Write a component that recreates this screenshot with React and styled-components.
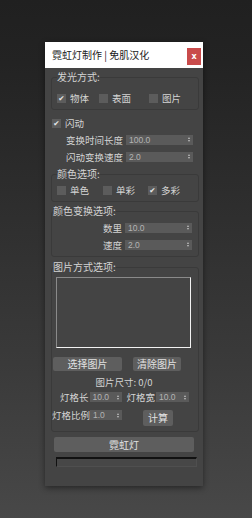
import styled, { createGlobalStyle } from "styled-components";

const Global = createGlobalStyle`
  html, body { margin: 0; padding: 0; }
  body {
    background: linear-gradient(#202020 0%, #232323 12%, #3a3a3a 70%, #484848 100%);
    min-height: 518px;
    font-family: "Noto Sans CJK SC", "Noto Sans", sans-serif;
  }
`;

const Page = styled.div`
  width: 252px;
  height: 518px;
  padding: 42px 0 0 45px;
  box-sizing: border-box;
`;

const Window = styled.div`
  width: 158px;
  height: 444px;
  background: #444444;
  box-shadow: 0 2px 6px rgba(0, 0, 0, 0.45);
  display: flex;
  flex-direction: column;
`;

const TitleBar = styled.div`
  height: 26px;
  flex-shrink: 0;
  background: #ffffff;
  display: flex;
  justify-content: space-between;
  padding: 0 2px 0 7px;
  font-size: 10px;
  line-height: 26px;
  color: #222;
  white-space: nowrap;
`;

const Close = styled.div`
  width: 14px;
  height: 17px;
  margin-top: 6px;
  background: #c94b4b;
  color: #fff;
  font-family: "DejaVu Sans", sans-serif;
  font-size: 8px;
  font-weight: bold;
  line-height: 17px;
  text-align: center;
`;

const Body = styled.div`
  padding: 3px 4px 0 6px;
  display: flex;
  flex-direction: column;
  color: #d4d4d4;
  font-size: 9.5px;
  white-space: nowrap;
`;

const Group = styled.fieldset`
  margin: ${(p) => p.$mt || 0}px 0 0 0;
  padding: ${(p) => p.$pad};
  border: 1px solid #3a3a3a;
  border-radius: 3px;
  min-width: 0;
  display: flex;
  flex-direction: column;
`;

const Legend = styled.legend`
  padding: 0;
  margin-left: ${(p) => p.$ml || 0}px;
  line-height: 12px;
  font-size: 10px;
  color: #d4d4d4;
`;

const CheckRow = styled.div`
  display: flex;
  height: 12px;
  align-items: center;
  margin-top: ${(p) => p.$mt || 0}px;
  padding-left: ${(p) => p.$pl || 0}px;
`;

const CheckItem = styled.span`
  display: flex;
  align-items: center;
  gap: 4px;
  width: ${(p) => (p.$w ? p.$w + "px" : "auto")};
  line-height: 12px;
`;

const Box = styled.span`
  width: 9px;
  height: 9px;
  flex-shrink: 0;
  background: #5c5c5c;
  display: inline-flex;
  align-items: center;
  justify-content: center;
  color: #e8e8e8;
  font-family: "DejaVu Sans", sans-serif;
  font-size: 7.5px;
  line-height: 9px;
`;

const Field = styled.div`
  display: flex;
  align-items: center;
  justify-content: ${(p) => p.$justify || "flex-end"};
  height: ${(p) => p.$h || 17}px;
  margin-top: ${(p) => p.$mt || 0}px;
  margin-left: ${(p) => p.$ml || 0}px;
  padding-left: ${(p) => p.$pl || 0}px;
  padding-right: ${(p) => p.$pr ?? 6}px;
  gap: ${(p) => p.$gap ?? 3}px;
`;

const Label = styled.span`
  flex-shrink: 0;
  margin-left: ${(p) => p.$ml || 0}px;
  line-height: 12px;
`;

const Spin = styled.div`
  width: ${(p) => p.$w}px;
  height: 10px;
  flex-shrink: 0;
  background: #5a5a5a;
  display: flex;
  align-items: center;
  justify-content: space-between;
  padding: 0 3px 0 3px;
  box-sizing: border-box;
  color: #b4b4b4;
  font-family: "Liberation Sans", sans-serif;
  font-size: 8.5px;
  line-height: 10px;
`;

const Arrows = styled.span`
  display: flex;
  flex-direction: column;
  gap: 1px;
  span {
    width: 0;
    height: 0;
    border-left: 1.5px solid transparent;
    border-right: 1.5px solid transparent;
  }
  span:first-child { border-bottom: 2px solid #c0c0c0; }
  span:last-child { border-top: 2px solid #c0c0c0; }
`;

const Picture = styled.div`
  height: 69px;
  margin: 4px 7px 0 4px;
  background: #444;
  border-top: 1px solid #8a8a8a;
  border-left: 1px solid #8a8a8a;
  border-right: 1px solid #f2f2f2;
  border-bottom: 1px solid #f2f2f2;
`;

const ButtonRow = styled.div`
  display: flex;
  gap: 11px;
  padding-left: 1px;
  margin-top: 9px;
`;

const Button = styled.div`
  width: ${(p) => p.$w}px;
  height: ${(p) => p.$h || 14}px;
  flex-shrink: 0;
  background: #5e5e5e;
  border-radius: 2px;
  display: flex;
  align-items: center;
  justify-content: center;
  font-size: 10px;
  line-height: 12px;
  color: #e2e2e2;
  margin-top: ${(p) => p.$mt || 0}px;
  margin-left: ${(p) => p.$ml || 0}px;
`;

const SizeText = styled.div`
  text-align: center;
  line-height: 12px;
  margin-top: 5px;
  padding-right: 2px;
`;

const Progress = styled.div`
  margin: 5px 2px 0 5px;
  height: 7px;
  border-top: 2px solid #111;
  border-left: 1px solid #111;
  background: #474747;
  border-right: 1px solid #4f4f4f;
  border-bottom: 1px solid #4f4f4f;
`;

function Spinner({ value, w }) {
  return (
    <Spin $w={w}>
      <span>{value}</span>
      <Arrows>
        <span />
        <span />
      </Arrows>
    </Spin>
  );
}

function Check({ on, label, w }) {
  return (
    <CheckItem $w={w}>
      <Box>{on ? "✔" : ""}</Box>
      {label}
    </CheckItem>
  );
}

export default function App() {
  return (
    <Page>
      <Global />
      <Window>
        <TitleBar>
          <span>霓虹灯制作 | 免肌汉化</span>
          <Close>x</Close>
        </TitleBar>
        <Body>
          <Group $pad="9px 0 5px 5px">
            <Legend>发光方式:</Legend>
            <CheckRow>
              <Check on label="物体" w={42} />
              <Check label="表面" w={50} />
              <Check label="图片" />
            </CheckRow>
          </Group>

          <CheckRow $mt={7} $pl={1}>
            <Check on label="闪动" />
          </CheckRow>
          <Field $mt={2}>
            <Label>变换时间长度</Label>
            <Spinner value="100.0" w={67} />
          </Field>
          <Field>
            <Label>闪动变换速度</Label>
            <Spinner value="2.0" w={67} />
          </Field>

          <Group $mt={3} $pad="4px 0 5px 5px">
            <Legend>颜色选项:</Legend>
            <CheckRow>
              <Check label="单色" w={46} />
              <Check label="单彩" w={45} />
              <Check on label="多彩" />
            </CheckRow>
          </Group>

          <Group $mt={3} $pad="2px 0 3px 0">
            <Legend $ml={1}>颜色变换选项:</Legend>
            <Field>
              <Label>数里</Label>
              <Spinner value="10.0" w={67} />
            </Field>
            <Field>
              <Label>速度</Label>
              <Spinner value="2.0" w={67} />
            </Field>
          </Group>

          <Group $mt={4} $pad="0 0 8px 0">
            <Legend $ml={1}>图片方式选项:</Legend>
            <Picture />
            <ButtonRow>
              <Button $w={69}>选择图片</Button>
              <Button $w={48}>清除图片</Button>
            </ButtonRow>
            <SizeText>图片尺寸: 0/0</SizeText>
            <Field $justify="flex-start" $h={16} $mt={1} $pl={8} $pr={0} $gap={1}>
              <Label>灯格长</Label>
              <Spinner value="10.0" w={32} />
              <Label $ml={4}>灯格宽</Label>
              <Spinner value="10.0" w={33} />
            </Field>
            <Field $justify="flex-start" $h={16} $mt={2} $pr={0} $gap={0}>
              <Label>灯格比例</Label>
              <Spinner value="1.0" w={32} />
              <Button $w={30} $h={16} $ml={21} $mt={6}>计算</Button>
            </Field>
          </Group>

          <Button $w={140} $h={15} $mt={5} $ml={3}>霓虹灯</Button>
          <Progress />
        </Body>
      </Window>
    </Page>
  );
}
